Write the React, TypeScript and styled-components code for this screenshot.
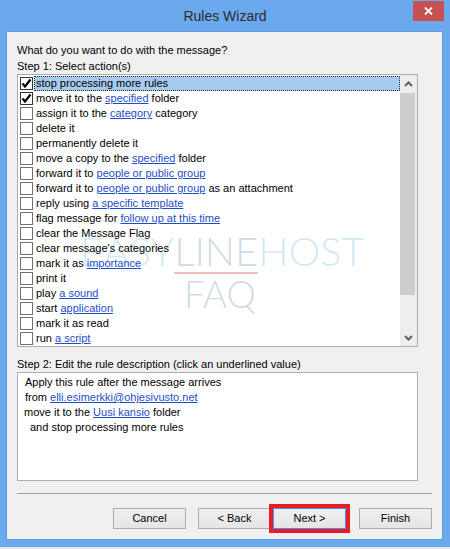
import React from "react";
import styled, { createGlobalStyle } from "styled-components";

const GlobalStyle = createGlobalStyle`
  html, body {
    margin: 0;
    padding: 0;
    background: #6ba9ef;
  }
  * {
    box-sizing: border-box;
  }
`;

const Frame = styled.div`
  width: 450px;
  height: 549px;
  background: #6ba9ef;
  display: flex;
  flex-direction: column;
  font-family: "Liberation Sans", Arial, sans-serif;
  font-size: 11px;
  color: #000;
  overflow: hidden;
`;

const TitleBar = styled.div`
  height: 31px;
  display: grid;
  grid-template-columns: 1fr auto 1fr;
  align-items: center;
`;

const Title = styled.div`
  font-size: 14px;
  color: #2b2b2b;
  grid-column: 2;
  padding-top: 1px;
`;

const CloseButton = styled.div`
  grid-column: 3;
  justify-self: end;
  align-self: start;
  margin: 1px 6px 0 0;
  width: 31px;
  height: 20px;
  background: #c75050;
  display: flex;
  align-items: center;
  justify-content: center;
`;

const Client = styled.div`
  margin-left: 6px;
  width: 437px;
  height: 509px;
  background: #f0f0f0;
  border: 1px solid #5b9be4;
  padding: 10px 10px 0 10px;
  display: flex;
  flex-direction: column;
`;

const Label = styled.div<{ $top?: number }>`
  height: 16px;
  line-height: 16px;
  margin-top: ${(p) => p.$top ?? 0}px;
  white-space: nowrap;
`;

const ListBox = styled.div`
  position: relative;
  width: 401px;
  height: 273px;
  border: 1px solid #abadb3;
  background: #fff;
  display: flex;
`;

const Rows = styled.div`
  position: relative;
  flex: 1;
  padding: 1px 0 0 1px;
  display: flex;
  flex-direction: column;
`;

const Row = styled.div`
  position: relative;
  z-index: 1;
  height: 15px;
  display: flex;
  align-items: center;
`;

const Box = styled.div<{ $checked?: boolean }>`
  width: 13px;
  height: 13px;
  margin-left: 1px;
  margin-right: 1px;
  border: 1px solid ${(p) => (p.$checked ? "#333" : "#707070")};
  background: #fff;
  display: flex;
  align-items: center;
  justify-content: center;
`;

const RowText = styled.div<{ $selected?: boolean }>`
  flex: 1;
  height: 15px;
  line-height: 13px;
  padding-left: 1px;
  white-space: nowrap;
  border: 1px solid transparent;
  ${(p) =>
    p.$selected &&
    `
    background: #a6cbf1;
    border: 1px dotted #3a2a1a;
  `}
`;

const Link = styled.span`
  color: #1f4dc8;
  text-decoration: underline;
`;

const Scrollbar = styled.div`
  width: 17px;
  background: #eeeeee;
  display: flex;
  flex-direction: column;
`;

const ScrollArrow = styled.div`
  height: 17px;
  display: flex;
  align-items: center;
  justify-content: center;
`;

const Thumb = styled.div`
  height: 202px;
  margin: 1px 2px 0 0;
  background: #cdcdcd;
`;

const Track = styled.div`
  flex: 1;
`;

// faint site watermark lying over the list
const Watermark = styled.div`
  position: absolute;
  left: 62px;
  top: 157px;
  z-index: 0;
  pointer-events: none;
  font-family: Lato, "Liberation Sans", sans-serif;
  font-weight: 300;
  font-size: 40px;
  line-height: 38px;
  display: flex;
  flex-direction: column;
`;

const Brand = styled.div`
  display: flex;
  white-space: nowrap;
`;

const Part = styled.span<{ $tone: "blue" | "grey" }>`
  color: ${(p) =>
    p.$tone === "blue" ? "rgba(110, 185, 225, 0.32)" : "rgba(90, 130, 160, 0.3)"};
`;

const LinePart = styled(Part)`
  border-bottom: 2px solid rgba(230, 90, 90, 0.4);
  height: 42px;
`;

const Faq = styled(Part)`
  padding-left: 104px;
  margin-top: 1px;
  font-size: 37px;
`;

const DescBox = styled.div`
  width: 401px;
  height: 109px;
  border: 1px solid #abadb3;
  background: #fff;
  padding-top: 2px;
`;

const DescLine = styled.div<{ $indent: number }>`
  height: 15px;
  line-height: 15px;
  padding-left: ${(p) => p.$indent}px;
  white-space: nowrap;
`;

const Separator = styled.div`
  margin-top: 12px;
  height: 1px;
  background: #a0a0a0;
`;

const ButtonRow = styled.div`
  margin-top: 14px;
  display: flex;
  justify-content: flex-end;
`;

const Button = styled.div<{ $gap: number; $focused?: boolean }>`
  width: 73px;
  height: 21px;
  margin-left: ${(p) => p.$gap}px;
  border: 1px solid ${(p) => (p.$focused ? "#3c97f5" : "#acacac")};
  background: linear-gradient(#f0f0f0, #e5e5e5);
  display: flex;
  align-items: center;
  justify-content: center;
  line-height: 1;
  ${(p) => p.$focused && `outline: 4px solid #e81d27; outline-offset: 0;`}
`;

const BottomStrip = styled.div`
  margin-top: auto;
  height: 2px;
  background: #e6e6e6;
`;

const Check = () => (
  <svg width="11" height="11" viewBox="0 0 11 11">
    <path d="M1.5 5.5 L4 8.5 L9.5 1.5" fill="none" stroke="#000" strokeWidth="2.2" />
  </svg>
);

const Chevron = ({ up }: { up?: boolean }) => (
  <svg width="9" height="6" viewBox="0 0 9 6">
    <path
      d={up ? "M1 5 L4.5 1.5 L8 5" : "M1 1 L4.5 4.5 L8 1"}
      fill="none"
      stroke="#606060"
      strokeWidth="2"
    />
  </svg>
);

type Action = { parts: (string | { link: string })[]; checked?: boolean };

const actions: Action[] = [
  { parts: ["stop processing more rules"], checked: true },
  { parts: ["move it to the ", { link: "specified" }, " folder"], checked: true },
  { parts: ["assign it to the ", { link: "category" }, " category"] },
  { parts: ["delete it"] },
  { parts: ["permanently delete it"] },
  { parts: ["move a copy to the ", { link: "specified" }, " folder"] },
  { parts: ["forward it to ", { link: "people or public group" }] },
  { parts: ["forward it to ", { link: "people or public group" }, " as an attachment"] },
  { parts: ["reply using ", { link: "a specific template" }] },
  { parts: ["flag message for ", { link: "follow up at this time" }] },
  { parts: ["clear the Message Flag"] },
  { parts: ["clear message's categories"] },
  { parts: ["mark it as ", { link: "importance" }] },
  { parts: ["print it"] },
  { parts: ["play ", { link: "a sound" }] },
  { parts: ["start ", { link: "application" }] },
  { parts: ["mark it as read"] },
  { parts: ["run ", { link: "a script" }] },
];

const renderParts = (parts: (string | { link: string })[]) =>
  parts.map((p, i) =>
    typeof p === "string" ? <React.Fragment key={i}>{p}</React.Fragment> : <Link key={i}>{p.link}</Link>
  );

export default function App() {
  return (
    <>
      <GlobalStyle />
      <Frame>
        <TitleBar>
          <Title>Rules Wizard</Title>
          <CloseButton>
            <svg width="9" height="8" viewBox="0 0 9 8">
              <path d="M1 0.5 L8 7.5 M8 0.5 L1 7.5" stroke="#fff" strokeWidth="1.8" />
            </svg>
          </CloseButton>
        </TitleBar>

        <Client>
          <Label>What do you want to do with the message?</Label>
          <Label>Step 1: Select action(s)</Label>

          <ListBox>
            <Rows>
              <Watermark>
                <Brand>
                  <Part $tone="blue">EASY</Part>
                  <LinePart $tone="grey">LINE</LinePart>
                  <Part $tone="blue">HOST</Part>
                </Brand>
                <Faq $tone="grey">FAQ</Faq>
              </Watermark>
              {actions.map((a, i) => (
                <Row key={i}>
                  <Box $checked={a.checked}>{a.checked && <Check />}</Box>
                  <RowText $selected={i === 0}>{renderParts(a.parts)}</RowText>
                </Row>
              ))}
            </Rows>
            <Scrollbar>
              <ScrollArrow>
                <Chevron up />
              </ScrollArrow>
              <Thumb />
              <Track />
              <ScrollArrow>
                <Chevron />
              </ScrollArrow>
            </Scrollbar>
          </ListBox>

          <Label $top={9}>Step 2: Edit the rule description (click an underlined value)</Label>
          <DescBox>
            <DescLine $indent={7}>Apply this rule after the message arrives</DescLine>
            <DescLine $indent={7}>
              from <Link>elli.esimerkki@ohjesivusto.net</Link>
            </DescLine>
            <DescLine $indent={6}>
              move it to the <Link>Uusi kansio</Link> folder
            </DescLine>
            <DescLine $indent={12}>and stop processing more rules</DescLine>
          </DescBox>

          <Separator />

          <ButtonRow>
            <Button $gap={0}>Cancel</Button>
            <Button $gap={12}>&lt; Back</Button>
            <Button $gap={2} $focused>
              Next &gt;
            </Button>
            <Button $gap={13}>Finish</Button>
          </ButtonRow>
        </Client>
        <BottomStrip />
      </Frame>
    </>
  );
}
